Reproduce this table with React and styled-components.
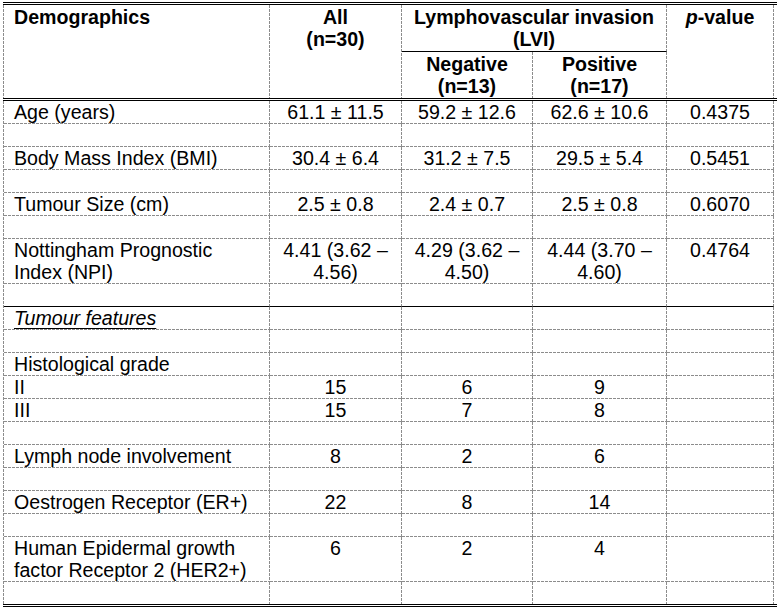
import * as React from "react";
import styled, { createGlobalStyle, css } from "styled-components";

const GRID = "266px 132px 131px 134px 107px";
const DASH = "#8c8c8c";

const GlobalStyle = createGlobalStyle`
  html, body {
    margin: 0;
    padding: 0;
    background: #ffffff;
  }
  body {
    font-family: "Liberation Sans", Arial, Helvetica, sans-serif;
    color: #000000;
  }
`;

// dashed rules drawn over the transparent borders, so the dash rhythm matches the print
const dashRight = `repeating-linear-gradient(to bottom, ${DASH} 0 3px, transparent 3px 4px) right top / 1px 100% no-repeat`;
const dashBottom = `repeating-linear-gradient(to right, ${DASH} 0 3px, transparent 3px 4px) left bottom / 100% 1px no-repeat`;
const dashLeft = `repeating-linear-gradient(to bottom, ${DASH} 0 3px, transparent 3px 4px) left top / 1px 100% no-repeat`;

const header = [
  { key: "demo", label: "Demographics", rows: 2, align: "left" },
  { key: "all", label: ["All", "(n=30)"], rows: 2 },
  { key: "lvi", label: ["Lymphovascular invasion", "(LVI)"], cols: 2, rule: true },
  { key: "p", label: "p-value", rows: 2, italicP: true },
  { key: "neg", label: ["Negative", "(n=13)"] },
  { key: "pos", label: ["Positive", "(n=17)"] },
];

const blank = { blank: true };

const rows = [
  { label: "Age (years)", all: "61.1 ± 11.5", neg: "59.2 ± 12.6", pos: "62.6 ± 10.6", p: "0.4375" },
  blank,
  { label: "Body Mass Index (BMI)", all: "30.4 ± 6.4", neg: "31.2 ± 7.5", pos: "29.5 ± 5.4", p: "0.5451" },
  blank,
  { label: "Tumour Size (cm)", all: "2.5 ± 0.8", neg: "2.4 ± 0.7", pos: "2.5 ± 0.8", p: "0.6070" },
  blank,
  {
    label: "Nottingham Prognostic Index (NPI)",
    all: "4.41 (3.62 – 4.56)",
    neg: "4.29 (3.62 – 4.50)",
    pos: "4.44 (3.70 – 4.60)",
    p: "0.4764",
  },
  { blank: true, rule: "solid" },
  { label: "Tumour features", section: true },
  blank,
  { label: "Histological grade" },
  { label: "II", all: "15", neg: "6", pos: "9" },
  { label: "III", all: "15", neg: "7", pos: "8" },
  blank,
  { label: "Lymph node involvement", all: "8", neg: "2", pos: "6" },
  blank,
  { label: "Oestrogen Receptor (ER+)", all: "22", neg: "8", pos: "14" },
  blank,
  { label: "Human Epidermal growth factor Receptor 2 (HER2+)", all: "6", neg: "2", pos: "4" },
  { blank: true, last: true },
];

function App() {
  return (
    <>
      <GlobalStyle />
      <Frame>
        <HeadBand>
          <HeadGrid>
            {header.map((h) => (
              <HeadCell key={h.key} $rows={h.rows} $cols={h.cols} $align={h.align} $rule={h.rule}>
                {h.italicP ? (
                  <>
                    <i>p</i>-value
                  </>
                ) : Array.isArray(h.label) ? (
                  h.label.map((line, i) => (
                    <React.Fragment key={i}>
                      {i > 0 && <br />}
                      {line}
                    </React.Fragment>
                  ))
                ) : (
                  h.label
                )}
              </HeadCell>
            ))}
          </HeadGrid>
        </HeadBand>

        <Sheet>
          {rows.map((r, i) => {
            const rule = r.last ? "none" : r.rule || "dashed";
            return (
              <Row key={i}>
                <Cell $align="left" $rule={rule}>
                  {r.section ? <SectionLabel>{r.label}</SectionLabel> : r.label}
                </Cell>
                <Cell $rule={rule}>{r.all}</Cell>
                <Cell $rule={rule}>{r.neg}</Cell>
                <Cell $rule={rule}>{r.pos}</Cell>
                <Cell $rule={rule}>{r.p}</Cell>
              </Row>
            );
          })}
        </Sheet>
      </Frame>
    </>
  );
}

const Frame = styled.div`
  margin: 2px 0 0 3px;
  width: 774px;
  border-top: 3px double #000000;
  border-bottom: 3px double #000000;
`;

const HeadBand = styled.div`
  border-bottom: 3px double #000000;
`;

const HeadGrid = styled.div`
  display: grid;
  grid-template-columns: ${GRID};
  grid-template-rows: 47px 46px;
  width: 771px;
  box-sizing: border-box;
  border-left: 1px solid transparent;
  background: ${dashLeft};
  background-origin: border-box;
`;

const cellBase = css`
  box-sizing: border-box;
  font-size: 19.6px;
  line-height: 22px;
  text-align: ${(p) => (p.$align === "left" ? "left" : "center")};
  padding: ${(p) => (p.$align === "left" ? "0 4px 0 10px" : "0 5px")};
  border-right: 1px solid transparent;
  background-origin: border-box;
`;

const HeadCell = styled.div`
  ${cellBase};
  padding-top: 1px;
  font-weight: bold;
  grid-row: span ${(p) => p.$rows || 1};
  grid-column: span ${(p) => p.$cols || 1};
  border-bottom: ${(p) => (p.$rule ? "1px solid #000000" : "none")};
  background: ${dashRight};
  background-origin: border-box;
`;

const Sheet = styled.div`
  width: 771px;
  box-sizing: border-box;
  border-left: 1px solid transparent;
  background: ${dashLeft};
  background-origin: border-box;
`;

const Row = styled.div`
  display: grid;
  grid-template-columns: ${GRID};
`;

const Cell = styled.div`
  ${cellBase};
  min-height: ${(p) => (p.$rule === "none" ? "22px" : "23px")};
  border-bottom: ${(p) =>
    p.$rule === "none" ? "none" : p.$rule === "solid" ? "1px solid #000000" : "1px solid transparent"};
  background: ${(p) => (p.$rule === "dashed" ? `${dashRight}, ${dashBottom}` : dashRight)};
  background-origin: border-box;
`;

const SectionLabel = styled.span`
  font-style: italic;
  text-decoration: underline;
  text-underline-offset: 3px;
`;

export default App;
